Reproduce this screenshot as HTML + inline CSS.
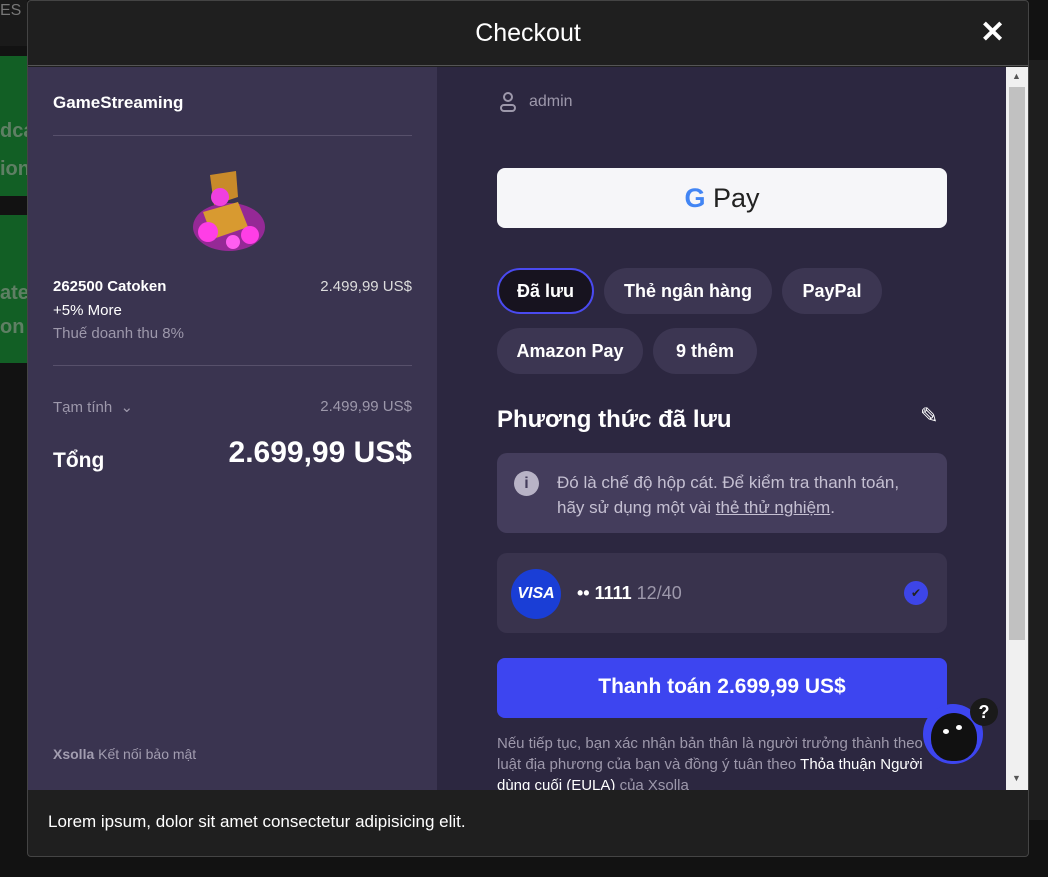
<!DOCTYPE html>
<html><head><meta charset="utf-8"><style>
*{box-sizing:border-box;margin:0;padding:0}
body{width:1048px;height:877px;overflow:hidden;background:#121212;font-family:"Liberation Sans",sans-serif;position:relative;color:#fff}
.a{position:absolute}
.pill{position:absolute;height:46px;border-radius:23px;background:#3c3652;font-weight:bold;font-size:18px;line-height:46px;text-align:center;color:#fff}
</style></head><body>
<div class="a" style="left:0;top:0;width:27px;height:46px;background:#1a1a1a;color:#777;font-size:16px;padding-top:2px">ES</div>
<div class="a" style="left:0;top:56px;width:27px;height:140px;background:#125f25"></div>
<div class="a" style="left:0;top:120px;color:#5f7f64;font-weight:bold;font-size:20px">dca</div>
<div class="a" style="left:0;top:158px;color:#5f7f64;font-weight:bold;font-size:20px">ion</div>
<div class="a" style="left:0;top:215px;width:27px;height:148px;background:#125f25"></div>
<div class="a" style="left:0;top:282px;color:#5f7f64;font-weight:bold;font-size:20px">ate</div>
<div class="a" style="left:0;top:316px;color:#5f7f64;font-weight:bold;font-size:20px">on</div>
<div class="a" style="left:1029px;top:60px;width:19px;height:760px;background:#1e1e1e"></div>

<div class="a" style="left:27px;top:0;width:1002px;height:857px;background:#1f1f1f;border:1px solid #444;border-radius:4px;overflow:hidden">
 <div class="a" style="left:0;top:0;width:1000px;height:65px;border-bottom:1px solid #555;text-align:center;font-size:25px;line-height:64px">Checkout</div>
 <div class="a" style="left:952px;top:16px;font-size:30px;font-weight:bold;line-height:32px">✕</div>
 <!-- left -->
 <div class="a" style="left:0;top:66px;width:409px;height:723px;background:#3a3450">
  <div class="a" style="left:25px;top:26px;font-weight:bold;font-size:17px">GameStreaming</div>
  <div class="a" style="left:25px;top:68px;width:359px;height:1px;background:#57506b"></div>
  <svg class="a" style="left:160px;top:100px" width="82" height="90" viewBox="0 0 82 90"><ellipse cx="41" cy="60" rx="36" ry="24" fill="#e020d0" opacity=".55"/><path d="M22 8 L48 4 L50 30 L26 38Z" fill="#c88a2a"/><path d="M15 45 L50 35 L60 60 L25 72Z" fill="#d89a30"/><circle cx="32" cy="30" r="9" fill="#f040e0"/><circle cx="20" cy="65" r="10" fill="#ff3ee6"/><circle cx="62" cy="68" r="9" fill="#ff3ee6"/><circle cx="45" cy="75" r="7" fill="#ff5ef0"/></svg>
  <div class="a" style="left:25px;top:211px;font-weight:bold;font-size:15px">262500 Catoken</div>
  <div class="a" style="right:25px;top:211px;font-size:15px;color:#ddd">2.499,99 US$</div>
  <div class="a" style="left:25px;top:235px;font-size:15px">+5% More</div>
  <div class="a" style="left:25px;top:258px;font-size:15px;color:#9d98ab">Thuế doanh thu 8%</div>
  <div class="a" style="left:25px;top:298px;width:359px;height:1px;background:#57506b"></div>
  <div class="a" style="left:25px;top:331px;font-size:15px;color:#9d98ab">Tạm tính &nbsp;⌄</div>
  <div class="a" style="right:25px;top:331px;font-size:15px;color:#9d98ab">2.499,99 US$</div>
  <div class="a" style="left:25px;top:382px;font-weight:bold;font-size:21px">Tổng</div>
  <div class="a" style="right:25px;top:369px;font-weight:bold;font-size:30px">2.699,99 US$</div>
  <div class="a" style="left:25px;top:679px;font-size:14px;color:#a29db0"><b>Xsolla</b> Kết nối bảo mật</div>
 </div>
 <!-- right -->
 <div class="a" style="left:409px;top:66px;width:569px;height:723px;background:#2c2740;overflow:hidden">
  <svg class="a" style="left:62px;top:25px" width="18" height="20" viewBox="0 0 18 20" fill="none" stroke="#9d98ab" stroke-width="2"><circle cx="9" cy="5" r="4"/><rect x="2" y="13" width="14" height="6" rx="3"/></svg>
  <div class="a" style="left:92px;top:26px;font-size:16px;color:#9d98ab">admin</div>
  <div class="a" style="left:60px;top:101px;width:450px;height:60px;background:#f6f6f9;border-radius:8px;text-align:center;line-height:60px;color:#222;font-size:27px"><span style="font-weight:bold;color:#4285f4">G</span> Pay</div>
  <div class="pill" style="left:60px;top:201px;width:97px;background:#17131f;border:2px solid #4a4af0;line-height:42px">Đã lưu</div>
  <div class="pill" style="left:167px;top:201px;width:168px">Thẻ ngân hàng</div>
  <div class="pill" style="left:345px;top:201px;width:100px">PayPal</div>
  <div class="pill" style="left:60px;top:261px;width:146px">Amazon Pay</div>
  <div class="pill" style="left:216px;top:261px;width:104px">9 thêm</div>
  <div class="a" style="left:60px;top:339px;font-size:24px;font-weight:bold">Phương thức đã lưu</div>
  <div class="a" style="left:483px;top:336px;font-size:22px">✎</div>
  <div class="a" style="left:60px;top:386px;width:450px;height:80px;background:#443d5c;border-radius:10px"></div>
  <div class="a" style="left:77px;top:404px;width:25px;height:25px;border-radius:50%;background:#b8b3c6;color:#443d5c;text-align:center;font-weight:bold;line-height:25px;font-size:16px">i</div>
  <div class="a" style="left:120px;top:403px;width:370px;font-size:17px;line-height:25px;color:#c5c0d2">Đó là chế độ hộp cát. Để kiểm tra thanh toán, hãy sử dụng một vài <u>thẻ thử nghiệm</u>.</div>
  <div class="a" style="left:60px;top:486px;width:450px;height:80px;background:#39334d;border-radius:10px"></div>
  <div class="a" style="left:74px;top:502px;width:50px;height:50px;border-radius:50%;background:#1a3ed6;text-align:center;line-height:50px;font-weight:bold;font-style:italic;font-size:16px">VISA</div>
  <div class="a" style="left:140px;top:516px;font-size:18px;font-weight:bold">•• 1111 <span style="color:#9d98ab;font-weight:normal">12/40</span></div>
  <div class="a" style="left:467px;top:514px;width:24px;height:24px;border-radius:50%;background:#3d45e8;text-align:center;line-height:24px;font-size:12px;color:#222">✔</div>
  <div class="a" style="left:60px;top:591px;width:450px;height:60px;background:#3d45f0;border-radius:8px;text-align:center;line-height:58px;font-size:21px;font-weight:bold">Thanh toán 2.699,99 US$</div>
  <div class="a" style="left:60px;top:666px;width:450px;font-size:15px;line-height:21px;color:#9d98ab">Nếu tiếp tục, bạn xác nhận bản thân là người trưởng thành theo luật địa phương của bạn và đồng ý tuân theo <span style="color:#fff">Thỏa thuận Người dùng cuối (EULA)</span> của Xsolla</div>
 </div>
 <div class="a" style="left:978px;top:66px;width:22px;height:723px;background:#f0f0f0"></div>
 <div class="a" style="left:981px;top:86px;width:16px;height:553px;background:#c1c1c1"></div>
 <div class="a" style="left:984px;top:70px;font-size:9px;color:#555">▲</div>
 <div class="a" style="left:984px;top:772px;font-size:9px;color:#555">▼</div>
 <div class="a" style="left:895px;top:703px;width:60px;height:60px;border-radius:50%;background:#3d45f0"></div>
 <div class="a" style="left:903px;top:712px;width:46px;height:48px;border-radius:50% 50% 45% 45%;background:#111"></div>
 <div class="a" style="left:915px;top:728px;width:6px;height:5px;border-radius:50%;background:#fff"></div>
 <div class="a" style="left:928px;top:724px;width:6px;height:5px;border-radius:50%;background:#fff"></div>
 <div class="a" style="left:942px;top:697px;width:28px;height:28px;border-radius:50%;background:#1a1a1a;text-align:center;line-height:28px;font-weight:bold;font-size:18px">?</div>
 <div class="a" style="left:20px;top:811px;font-size:17px">Lorem ipsum, dolor sit amet consectetur adipisicing elit.</div>
</div>
</body></html>
